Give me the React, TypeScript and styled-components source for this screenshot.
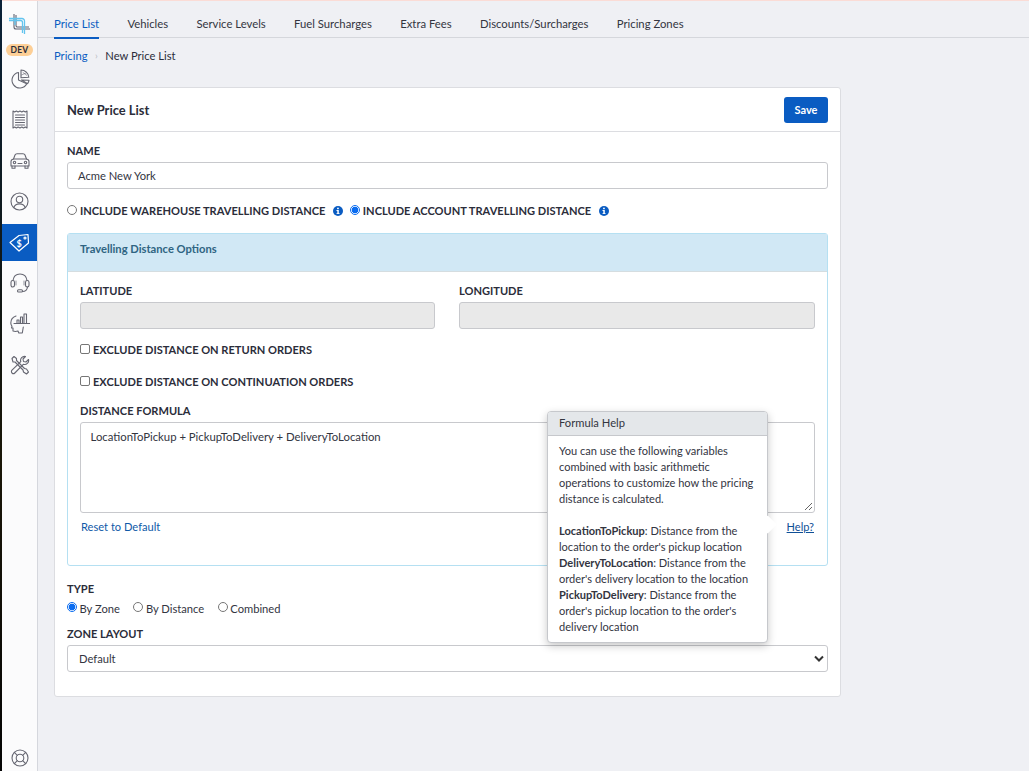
import React from "react";
import styled, { createGlobalStyle } from "styled-components";

const Global = createGlobalStyle`
  html, body { margin: 0; padding: 0; height: 771px; overflow: hidden; background: #eff0f4; }
  body { font-family: Lato, "Open Sans", sans-serif; font-size: 11.2px; color: #2b2d3a; }
  * { box-sizing: border-box; }
`;
const Shell = styled.div`
  display: flex; width: 1029px; height: 771px; position: relative;
  border-top: 1px solid #fbdcd6;
`;
const Wallpaper = styled.div`
  width: 2px; margin-top: -1px; background: linear-gradient(180deg, #0b2238 0%, #12150f 45%, #1a1608 60%, #050505 100%);
`;
const Sidebar = styled.nav`
  width: 36px; background: #fbfbfc; border-right: 1px solid #d5d7dd;
  display: flex; flex-direction: column; align-items: center;
`;
const Logo = styled.div`
  height: 41px; padding-top: 12px; display: flex; justify-content: center; width: 100%;
`;
const DevBadge = styled.div`
  width: 27px; height: 12px; margin-top: 2px; margin-bottom: 4.5px; border-radius: 6px; background: #fdcf96;
  font-size: 8.5px; font-weight: 700; line-height: 12px; text-align: center; color: #2b2d3a;
  letter-spacing: 0.2px;
`;
const NavItem = styled.div<{ $active?: boolean }>`
  width: 35px; height: 37px; margin-bottom: 3.8px; display: flex; align-items: center; justify-content: center;
  background: ${(p) => (p.$active ? "#0a5cc2" : "transparent")};
  color: ${(p) => (p.$active ? "#fff" : "#666772")};
`;
const BottomItem = styled.div`
  margin-top: auto; padding-bottom: 4px; color: #666772; display: flex;
`;
const Main = styled.main`
  flex: 1; display: flex; flex-direction: column; min-width: 0;
`;
const Tabs = styled.div`
  height: 37px; border-bottom: 1px solid #d5d7dc; display: flex; padding-left: 16px; gap: 28.3px;
`;
const Tab = styled.div<{ $active?: boolean }>`
  height: 37px; padding: 15px 0 0; line-height: 15px; font-size: 11.3px;
  color: ${(p) => (p.$active ? "#0a5cc2" : "#33353f")};
  border-bottom: ${(p) => (p.$active ? "1px solid #0a5cc2" : "none")};
  box-shadow: ${(p) => (p.$active ? "0 1px 0 #0a5cc2" : "none")};
`;
const Crumbs = styled.div`
  display: flex; padding: 10px 0 0 16px; height: 49px; align-items: flex-start; line-height: 15px;
`;
const CrumbLink = styled.a`
  color: #0a5cc2;
`;
const CrumbSep = styled.span`
  color: #bbbcc2; margin: 0 7.5px; font-size: 10px; display: inline-flex; height: 15px; align-items: center;
`;
const Card = styled.section`
  position: relative; margin-left: 16px; width: 787px; height: 610px; background: #fff;
  border: 1px solid #dcdde1; border-radius: 3px;
`;
const CardHead = styled.header`
  height: 44px; border-bottom: 1px solid #dcdde1; display: flex; align-items: center; justify-content: space-between;
  padding: 0 12px;
`;
const CardTitle = styled.h1`
  margin: 0; font-size: 12.9px; font-weight: 700; color: #2b2d3a;
`;
const SaveButton = styled.button`
  width: 44px; height: 26px; border: none; border-radius: 3px; background: #0a5cc2; color: #fff;
  font: 700 11px Lato, sans-serif; padding: 0;
`;
const CardBody = styled.div`
  padding: 12px 12px 0;
`;
const Label = styled.label`
  display: block; font-size: 11.07px; font-weight: 700; line-height: 14px; color: #2b2d3a; text-transform: uppercase;
`;
const TextInput = styled.div<{ $disabled?: boolean }>`
  height: 27px; margin-top: 4px; border: 1px solid #c8c9cd; border-radius: 3px; padding: 0 10px; line-height: 25px;
  background: ${(p) => (p.$disabled ? "#e9e9e9" : "#fff")}; color: #33353f;
`;
const RadioRow = styled.div`
  display: flex; align-items: center; height: 14px; margin-top: 15px;
`;
const Dot = styled.span<{ $on?: boolean }>`
  display: inline-block; flex: none; width: 10px; height: 10px; border-radius: 50%; margin-right: 3px; position: relative; top: -1px;
  border: ${(p) => (p.$on ? "1px solid #0a6cf0" : "1px solid #767676")};
  background: ${(p) => (p.$on ? "radial-gradient(circle, #0a6cf0 0 3.2px, #fff 3.6px)" : "#fff")};
`;
const InfoIcon = styled.span`
  display: inline-flex; margin-left: 8px; margin-right: 6.5px; color: #0a5cc2;
`;
const Panel = styled.div`
  margin-top: 15px; height: 333px; border: 1px solid #b5e0f2; border-radius: 3px; background: #fff;
`;
const PanelHead = styled.div`
  height: 38px; background: #d1e8f5; border-bottom: 1px solid #d5dde0; padding: 8px 12px; line-height: 14px;
  font-weight: 700; color: #2f6482; font-size: 11.2px;
`;
const PanelBody = styled.div`
  padding: 12px 12px 0;
`;
const Coords = styled.div`
  display: grid; grid-template-columns: 355px 356px; gap: 24px;
`;
const CheckRow = styled.div<{ $gap: number }>`
  display: flex; align-items: center; height: 14px; margin-top: ${(p) => p.$gap}px;
`;
const Box = styled.span`
  display: inline-block; width: 10px; height: 10px; margin-right: 3px; position: relative; top: -1px;
  border: 1px solid #767676; border-radius: 2px; background: #fff;
`;
const FormulaLabel = styled(Label)`
  margin-top: 15px;
`;
const TextArea = styled.div`
  position: relative; height: 91px; margin-top: 4px; border: 1px solid #c8c9cd; border-radius: 3px; padding: 5.5px 9.500px; line-height: 15px; color: #33353f;
  font-size: 11.34px;
`;
const Grip = styled.svg`
  position: absolute; right: 1px; bottom: 1px;
`;
const LinkRow = styled.div`
  display: flex; justify-content: space-between; padding: 7px 1px 0; line-height: 14px;
`;
const BlueLink = styled.a`
  color: #0f5aa8; font-size: 11.1px;
`;
const HelpLink = styled.a`
  color: #0f4f96; text-decoration: underline; font-size: 11px;
`;
const TypeLabel = styled(Label)`
  margin-top: 16px;
`;
const TypeRow = styled.div`
  display: flex; align-items: center; gap: 13.5px; height: 14px; margin-top: 5px; color: #33353f; font-size: 11.2px;
`;
const TypeOption = styled.span`
  display: inline-flex; align-items: center;
  ${Dot} { margin-right: 2.5px; }
`;
const ZoneLabel = styled(Label)`
  margin-top: 12px;
`;
const Select = styled.div`
  height: 27px; margin-top: 4px; border: 1px solid #c8c9cd; border-radius: 3px; padding: 0 3px 0 11px; line-height: 25px; color: #33353f;
  display: flex; align-items: center; justify-content: space-between;
`;
const Popover = styled.aside`
  position: absolute; left: 492px; top: 323px; width: 221px; height: 232px; background: #fff;
  border: 1px solid #c6c8cc; border-radius: 4px; box-shadow: 0 3px 9px rgba(0,0,0,0.22); z-index: 3;
  &::after {
    content: ""; position: absolute; right: -7px; top: 106px; width: 13px; height: 13px; background: #fff;
    transform: rotate(45deg); border-radius: 1px;
  }
`;
const PopoverHead = styled.div`
  height: 24px; background: #e4e7ea; border-bottom: 1px solid #c6c8cc; border-radius: 3px 3px 0 0; padding: 0 11px; line-height: 22px;
  color: #33353f; font-size: 11.2px;
`;
const PopoverBody = styled.div`
  padding: 7px 11px 0; line-height: 16px; font-size: 11.05px; color: #33353f; position: relative; z-index: 1;
  b { font-weight: 700; }
`;

const S = { fill: "none", stroke: "currentColor", strokeWidth: 1.1, strokeLinecap: "round", strokeLinejoin: "round" } as const;

const LogoMark = () => (
  <svg width="22" height="22" viewBox="0 0 22 22" fill="none">
    <path d="M5 1v13a2 2 0 0 0 2 2h14M7 2v10.500A1.500 1.500 0 0 0 8.500 14H20" stroke="#5f6372" strokeWidth="1.1" />
    <path d="M0 5.500h13a2.500 2.500 0 0 1 2.500 2.500v13M0 7.500h11.500A2 2 0 0 1 13.500 9.500V20M6 5v7" stroke="#63c4ee" strokeWidth="1.3" />
  </svg>
);
const PieIcon = () => (
  <svg width="20" height="20" viewBox="0 0 20 20" {...S}>
    <path d="M8.500 3.500a7.800 7.800 0 1 0 8.300 11.200L8.500 11z" />
    <path d="M11 1a7.800 7.800 0 0 1 7.800 7.300L11 8.800z" />
    <path d="M11.500 11l7.500.3a8 8 0 0 1-1.400 3.300z" />
    <path d="M13 3.500l4 3M11.500 6l4.500-2" strokeWidth=".6" />
  </svg>
);
const ReceiptIcon = () => (
  <svg width="16" height="19" viewBox="0 0 16 19" {...S}>
    <path d="M1 1l1.700 1L4.400 1l1.700 1L8 1l1.800 1 1.700-1 1.800 1L15 1v17l-1.700-1-1.800 1-1.700-1L8 18l-1.900-1-1.700 1-1.700-1L1 18z" />
    <path d="M3.500 5h9M3.500 7.500h9M3.500 10h9M3.500 12.500h9M3.500 15h9" />
  </svg>
);
const CarIcon = () => (
  <svg width="20" height="16" viewBox="0 0 20 16" {...S}>
    <path d="M1 8.500c0-1.200 1-2.200 2.500-2.500L5 2C5.400 1 6 .8 7 .8h6c1 0 1.600.2 2 1.200l1.500 4c1.500.3 2.500 1.300 2.500 2.500V13H1z" />
    <path d="M3.500 6h13M2 13v2.200h3V13M15 13v2.200h3V13M8 10.500h4" />
    <circle cx="4.500" cy="9.500" r="1.200" />
    <circle cx="15.500" cy="9.500" r="1.200" />
  </svg>
);
const UserIcon = () => (
  <svg width="19" height="19" viewBox="0 0 19 19" {...S}>
    <circle cx="9.500" cy="9.500" r="8.500" />
    <circle cx="9.500" cy="7.500" r="3.200" />
    <path d="M3.800 15.500c1-2.500 3-3.600 5.700-3.600s4.700 1.100 5.700 3.600" />
  </svg>
);
const TagIcon = () => (
  <svg width="21" height="21" viewBox="0 0 21 21" fill="none" stroke="#fff" strokeWidth="1.2" strokeLinejoin="round">
    <path d="M1 10.500L10 3.500l9-1 .5 8.500-9.500 8z" />
    <circle cx="16" cy="6" r="1" />
    <text x="7.500" y="15" fontSize="9" fontWeight="700" fill="#fff" stroke="none" fontFamily="Lato, sans-serif">$</text>
  </svg>
);
const HeadsetIcon = () => (
  <svg width="20" height="20" viewBox="0 0 20 20" {...S}>
    <path d="M3 7.500C3.500 3.500 6.300 1 10 1s6.500 2.500 7 6.500" />
    <rect x="1" y="7.500" width="3.500" height="6.500" rx="1.700" />
    <rect x="15.500" y="7.500" width="3.500" height="6.500" rx="1.700" />
    <path d="M17.500 14c-.3 2.500-2 4.500-5 4.500" />
    <rect x="7.500" y="16.800" width="5" height="2.200" rx="1.100" />
    <path d="M6 8v4M14 8v4" strokeWidth=".7" />
  </svg>
);
const BrainChartIcon = () => (
  <svg width="20" height="21" viewBox="0 0 20 21" {...S}>
    <path d="M6 3C3 4 .8 7 .8 10c0 1.500.7 2.500 1.200 3.200L1.500 15H3v3c2 .8 3.500.5 5 0l.8 2h3.500l1-6" />
    <path d="M4 10.500h16" />
    <path d="M7 10.500V7h2v3.500M10.500 10.500V4h2v6.500M14 10.500V1h2.500v9.500" />
  </svg>
);
const ToolsIcon = () => (
  <svg width="20" height="20" viewBox="0 0 20 20" {...S}>
    <path d="M2 3.500L4 1.500l2.500 2v2l8 8 2 .5 2 3-2 2-3-2-.5-2-8-8h-2z" />
    <path d="M18.500 4.500a4 4 0 0 1-5.200 4.800L4.800 18a1.800 1.800 0 0 1-2.800-2.800l8.800-8.500A4 4 0 0 1 15.500 1.500L13 4l.5 2.500 2.500.5z" />
  </svg>
);
const BuoyIcon = () => (
  <svg width="18" height="18" viewBox="0 0 18 18" {...S}>
    <circle cx="9" cy="9" r="8" />
    <circle cx="9" cy="9" r="3.800" />
    <path d="M3.300 3.300l3 3M14.700 3.300l-3 3M3.300 14.700l3-3M14.700 14.700l-3-3" />
  </svg>
);
const Info = () => (
  <InfoIcon>
    <svg width="10" height="10" viewBox="0 0 10 10">
      <circle cx="5" cy="5" r="5" fill="currentColor" />
      <rect x="4.100" y="1.700" width="1.700" height="1.500" fill="#fff" />
      <path d="M3.500 4h2.300v3.200h.8v.9H3.500v-.9h.8V4.900h-.8z" fill="#fff" />
    </svg>
  </InfoIcon>
);

const tabs = ["Price List", "Vehicles", "Service Levels", "Fuel Surcharges", "Extra Fees", "Discounts/Surcharges", "Pricing Zones"];
const navIcons = [<PieIcon />, <ReceiptIcon />, <CarIcon />, <UserIcon />, <TagIcon />, <HeadsetIcon />, <BrainChartIcon />, <ToolsIcon />];

export default function App() {
  return (
    <>
      <Global />
      <Shell>
        <Wallpaper />
        <Sidebar>
          <Logo><LogoMark /></Logo>
          <DevBadge>DEV</DevBadge>
          {navIcons.map((ic, i) => (
            <NavItem key={i} $active={i === 4}>{ic}</NavItem>
          ))}
          <BottomItem><BuoyIcon /></BottomItem>
        </Sidebar>
        <Main>
          <Tabs>
            {tabs.map((t, i) => <Tab key={t} $active={i === 0}>{t}</Tab>)}
          </Tabs>
          <Crumbs>
            <CrumbLink>Pricing</CrumbLink>
            <CrumbSep>›</CrumbSep>
            <span>New Price List</span>
          </Crumbs>
          <Card>
            <CardHead>
              <CardTitle>New Price List</CardTitle>
              <SaveButton>Save</SaveButton>
            </CardHead>
            <CardBody>
              <Label>Name</Label>
              <TextInput>Acme New York</TextInput>
              <RadioRow>
                <Dot />
                <Label as="span">Include Warehouse Travelling Distance</Label>
                <Info />
                <Dot $on />
                <Label as="span">Include Account Travelling Distance</Label>
                <Info />
              </RadioRow>
              <Panel>
                <PanelHead>Travelling Distance Options</PanelHead>
                <PanelBody>
                  <Coords>
                    <div><Label>Latitude</Label><TextInput $disabled /></div>
                    <div><Label>Longitude</Label><TextInput $disabled /></div>
                  </Coords>
                  <CheckRow $gap={14}><Box /><Label as="span">Exclude Distance on Return Orders</Label></CheckRow>
                  <CheckRow $gap={18}><Box /><Label as="span">Exclude Distance on Continuation Orders</Label></CheckRow>
                  <FormulaLabel>Distance Formula</FormulaLabel>
                  <TextArea>
                    LocationToPickup + PickupToDelivery + DeliveryToLocation
                    <Grip width="9" height="9" viewBox="0 0 9 9" stroke="#666" strokeWidth="1">
                      <path d="M1 8L8 1M5 8l3-3" />
                    </Grip>
                  </TextArea>
                  <LinkRow>
                    <BlueLink>Reset to Default</BlueLink>
                    <HelpLink>Help?</HelpLink>
                  </LinkRow>
                </PanelBody>
              </Panel>
              <TypeLabel>Type</TypeLabel>
              <TypeRow>
                <TypeOption><Dot $on />By Zone</TypeOption>
                <TypeOption><Dot />By Distance</TypeOption>
                <TypeOption><Dot />Combined</TypeOption>
              </TypeRow>
              <ZoneLabel>Zone Layout</ZoneLabel>
              <Select>
                Default
                <svg width="10" height="7" viewBox="0 0 10 7" fill="none" stroke="#333" strokeWidth="2"><path d="M1 1.500l4 4 4-4" /></svg>
              </Select>
            </CardBody>
            <Popover>
              <PopoverHead>Formula Help</PopoverHead>
              <PopoverBody>
                You can use the following variables combined with basic arithmetic operations to customize how the pricing distance is calculated.
                <br /><br />
                <b>LocationToPickup</b>: Distance from the location to the order's pickup location<br />
                <b>DeliveryToLocation</b>: Distance from the order's delivery location to the location<br />
                <b>PickupToDelivery</b>: Distance from the order's pickup location to the order's delivery location
              </PopoverBody>
            </Popover>
          </Card>
        </Main>
      </Shell>
    </>
  );
}
